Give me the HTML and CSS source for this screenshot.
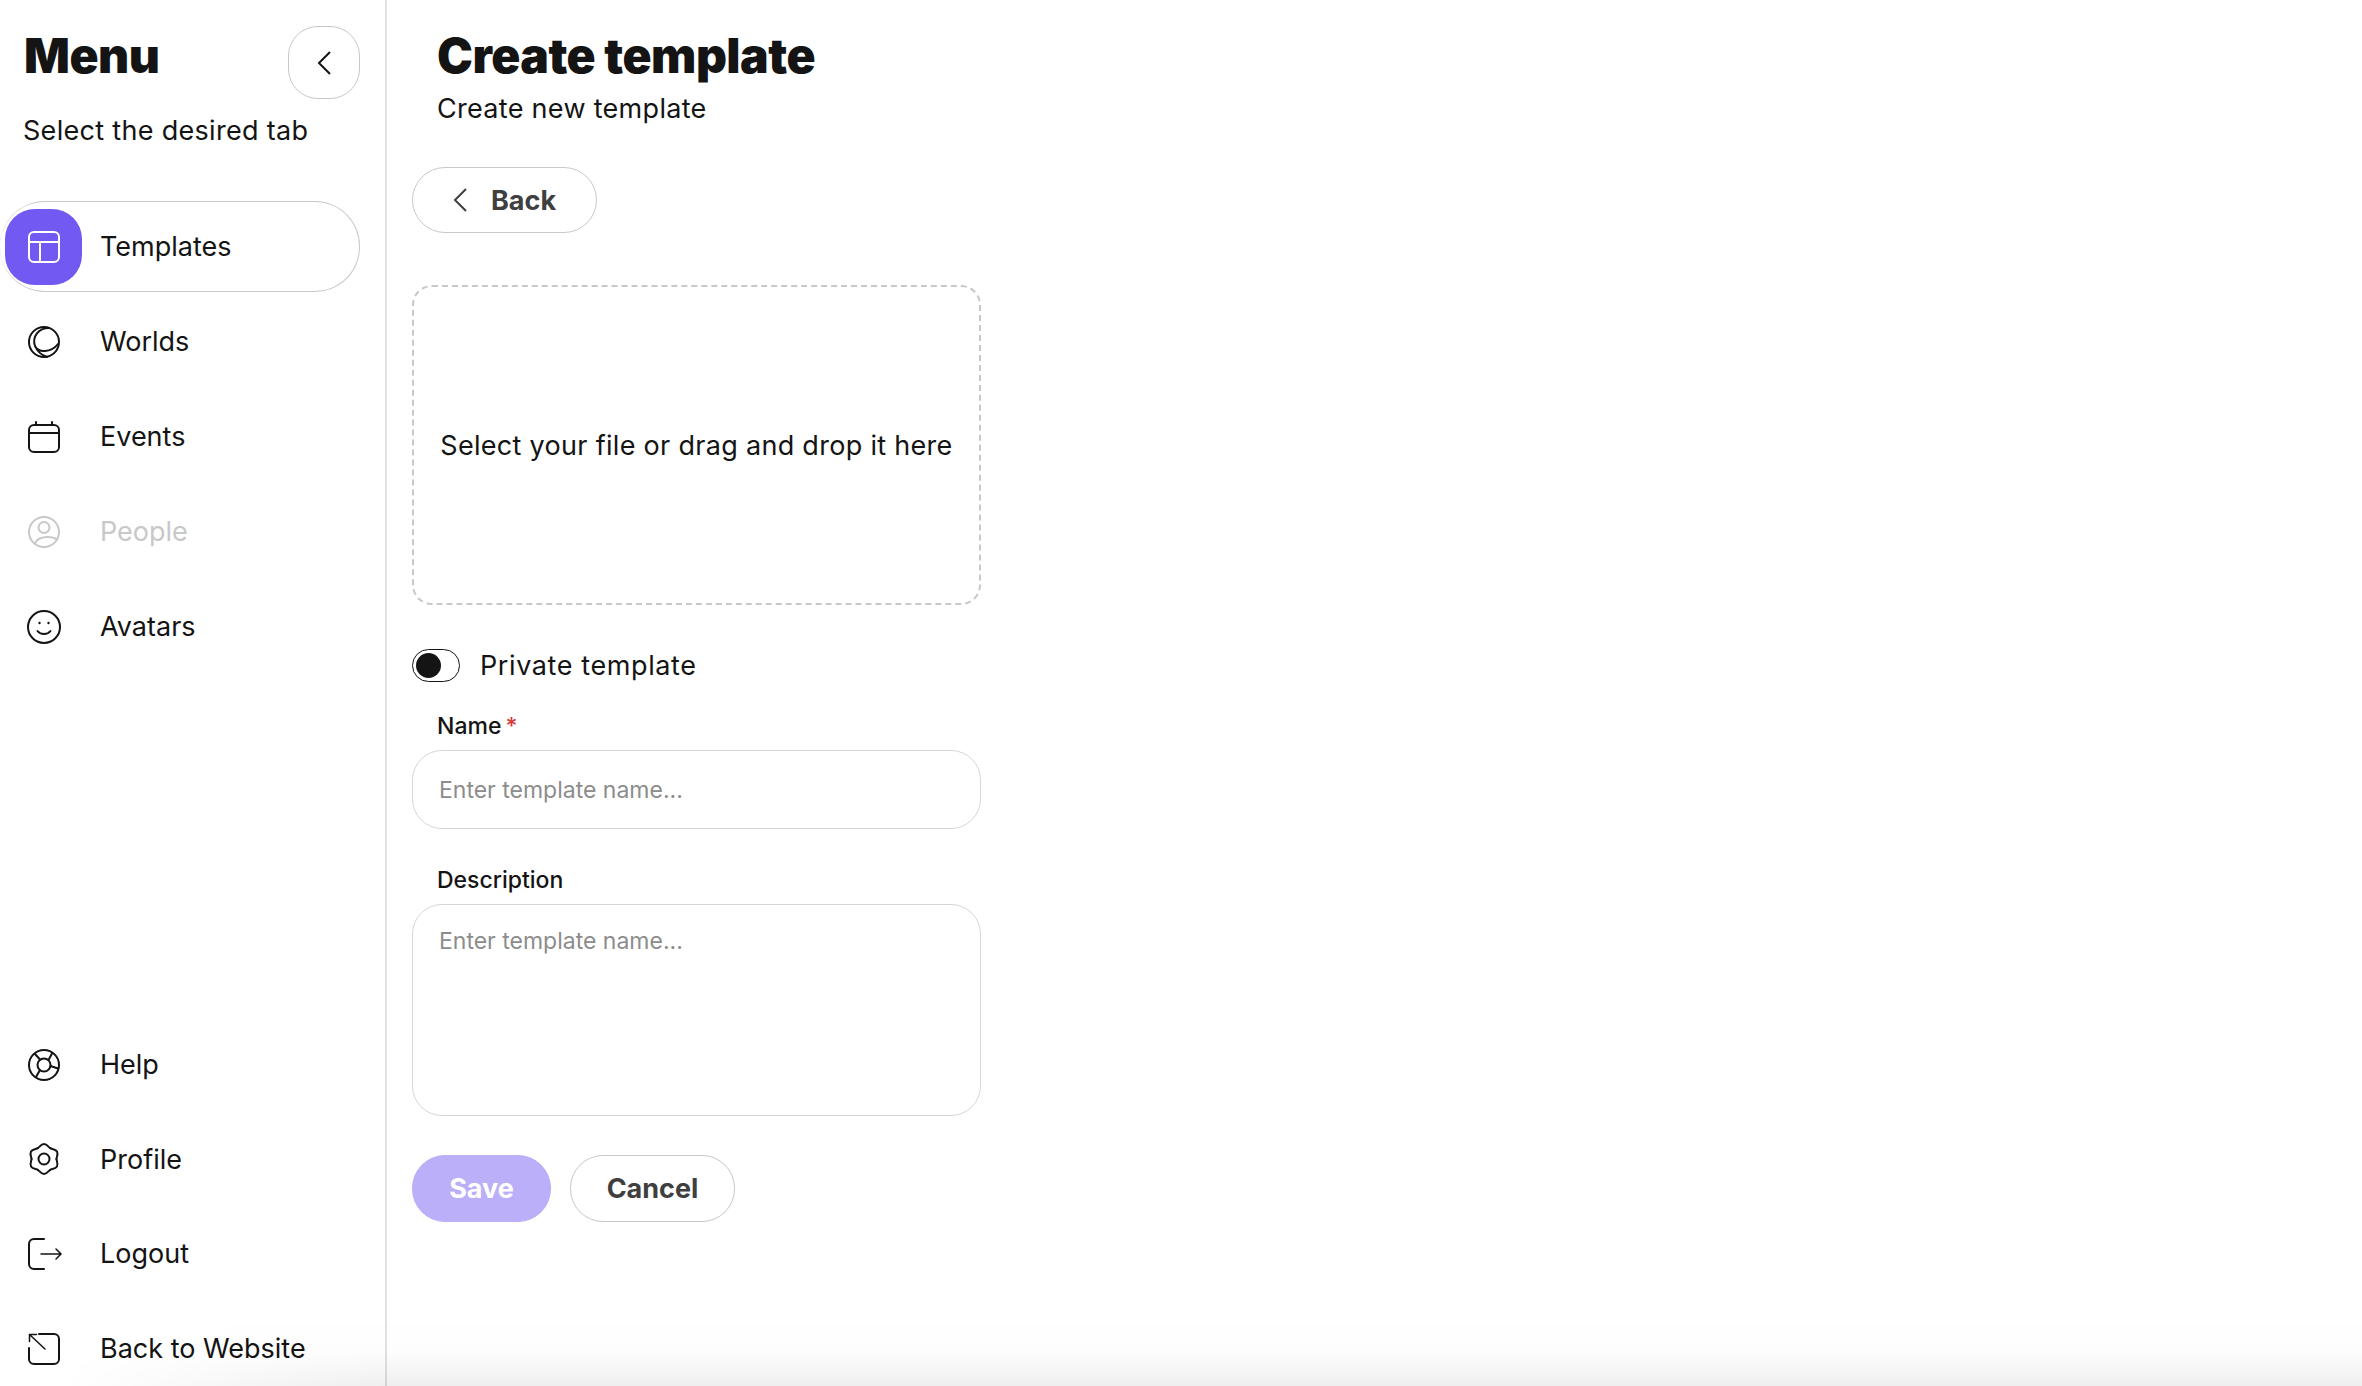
FILE: index.html
```html
<!DOCTYPE html>
<html lang="en">
<head>
    <meta charset="UTF-8">
    <meta name="viewport" content="width=device-width, initial-scale=1.0">
    <title>Create template</title>
    <link rel="stylesheet" href="styles.css">
</head>
<body>
    <aside class="sidebar">
        <div class="menu-head">
            <h2>Menu</h2>
            <button class="collapse-btn" type="button">
                <svg class="chevron" viewBox="0 0 14 24"><path d="M13 1 L2 12 L13 23"/></svg>
            </button>
        </div>
        <p class="menu-sub">Select the desired tab</p>

        <nav class="nav-list">
            <a class="nav-item active" href="#">
                <span class="nav-icon">
                    <svg viewBox="0 0 32 32"><rect x="1" y="1" width="30" height="30" rx="5"/><path d="M1 11 H31 M12 11 V31"/></svg>
                </span>
                Templates
            </a>
            <a class="nav-item" href="#">
                <span class="nav-icon">
                    <svg viewBox="0 0 32 32"><circle cx="16" cy="16" r="15"/><path d="M21 2 C10 2 4 11 7 20 C10 27 23 27 30 18 M7 20 C9 25 13 29 19 31"/></svg>
                </span>
                Worlds
            </a>
            <a class="nav-item" href="#">
                <span class="nav-icon">
                    <svg viewBox="0 0 32 32"><rect x="1" y="4" width="30" height="27" rx="5"/><path d="M1 12 H31 M8 1 V4 M24 1 V4"/></svg>
                </span>
                Events
            </a>
            <a class="nav-item disabled" href="#">
                <span class="nav-icon">
                    <svg viewBox="0 0 32 32"><circle cx="16" cy="16" r="15"/><circle cx="16" cy="11.5" r="5.5"/><path d="M7 27.5 C9 22 15 21 20 21 C24 21 27 22 29 23.5"/></svg>
                </span>
                People
            </a>
            <a class="nav-item" href="#">
                <span class="nav-icon">
                    <svg viewBox="0 0 32 32"><circle cx="16" cy="16" r="16"/><path d="M9.5 20 C12.5 24 19.5 24 22.5 20"/><circle class="dot" cx="11.5" cy="12" r="1.2"/><circle class="dot" cx="20.5" cy="12" r="1.2"/></svg>
                </span>
                Avatars
            </a>
        </nav>

        <nav class="nav-list nav-bottom">
            <a class="nav-item" href="#">
                <span class="nav-icon">
                    <svg viewBox="0 0 32 32"><circle cx="16" cy="16" r="15"/><circle cx="16" cy="16" r="6.5"/><path d="M12 10.5 L7 5 M20.5 11 L24 4.5 M22.5 17 L30 19.5 M12 21 L8 28"/></svg>
                </span>
                Help
            </a>
            <a class="nav-item" href="#">
                <span class="nav-icon">
                    <svg viewBox="0 0 32 32">
                        <path id="lobe" d="M9.75 5.2 C11.5 4.2 13 1 16 1 C19 1 20.5 4.2 22.25 5.2"/>
                        <use href="#lobe" transform="rotate(60 16 16)"/>
                        <use href="#lobe" transform="rotate(120 16 16)"/>
                        <use href="#lobe" transform="rotate(180 16 16)"/>
                        <use href="#lobe" transform="rotate(240 16 16)"/>
                        <use href="#lobe" transform="rotate(300 16 16)"/>
                        <circle cx="16" cy="16" r="5.5"/>
                    </svg>
                </span>
                Profile
            </a>
            <a class="nav-item" href="#">
                <span class="nav-icon">
                    <svg viewBox="0 0 32 32"><path d="M16 1 H6 A5 5 0 0 0 1 6 V26 A5 5 0 0 0 6 31 H16"/><path class="thin" d="M13 16 H33 M28 11 L33 16 L28 21"/></svg>
                </span>
                Logout
            </a>
            <a class="nav-item" href="#">
                <span class="nav-icon">
                    <svg viewBox="0 0 32 32"><path d="M11 1 H26 A5 5 0 0 1 31 6 V26 A5 5 0 0 1 26 31 H6 A5 5 0 0 1 1 26 V15"/><path class="thin" d="M1.5 1.5 L17 16 M1.5 8.5 V1.5 H8.5"/></svg>
                </span>
                Back to Website
            </a>
        </nav>
    </aside>

    <main class="content">
        <header class="page-head">
            <h1>Create template</h1>
            <p>Create new template</p>
        </header>

        <button class="btn btn-back" type="button">
            <svg class="chevron" viewBox="0 0 14 24"><path d="M13 1 L2 12 L13 23"/></svg>
            Back
        </button>

        <form class="template-form">
            <div class="dropzone">Select your file or drag and drop it here</div>

            <label class="toggle-row">
                <span class="toggle"><span class="toggle-knob"></span></span>
                Private template
            </label>

            <div class="field field-name">
                <label for="tplName">Name<span class="required">*</span></label>
                <input type="text" id="tplName" placeholder="Enter template name...">
            </div>

            <div class="field field-desc">
                <label for="tplDesc">Description</label>
                <textarea id="tplDesc" placeholder="Enter template name..."></textarea>
            </div>

            <div class="actions">
                <button class="btn btn-save" type="button">Save</button>
                <button class="btn btn-cancel" type="button">Cancel</button>
            </div>
        </form>
    </main>
</body>
</html>
```

FILE: styles.css
```css
* {
    box-sizing: border-box;
    margin: 0;
    padding: 0;
    font-family: 'Inter', sans-serif;
}

body {
    display: flex;
    height: 100vh;
    overflow: hidden;
    background: #fff;
    color: #141414;
}

/* faint shade along the bottom edge */
body::after {
    content: '';
    position: fixed;
    left: 0;
    right: 0;
    bottom: 0;
    height: 70px;
    pointer-events: none;
    background: linear-gradient(to bottom, rgba(0, 0, 0, 0), rgba(0, 0, 0, 0.008) 50%, rgba(0, 0, 0, 0.062));
    -webkit-mask-image: linear-gradient(to right, transparent 60px, #000 390px);
    mask-image: linear-gradient(to right, transparent 60px, #000 390px);
}

.sidebar {
    flex: 0 0 387px;
    height: 100vh;
    display: flex;
    flex-direction: column;
    border-right: 2px solid #e2e2e2;
    padding-top: 26px;
}

.menu-head {
    display: flex;
    justify-content: space-between;
    align-items: flex-start;
    padding: 0 25px 0 24px;
}

.menu-head h2 {
    font-size: 48px;
    font-weight: 900;
    line-height: 60px;
    letter-spacing: -0.5px;
}

.collapse-btn {
    width: 72px;
    height: 73px;
    display: flex;
    align-items: center;
    justify-content: center;
    background: #fff;
    border: 1px solid #c8c8c8;
    border-radius: 30px;
}

.chevron {
    width: 14px;
    height: 24px;
    fill: none;
    stroke: #141414;
    stroke-width: 2;
}

.menu-sub {
    font-size: 27px;
    line-height: 36px;
    margin-top: 14px;
    padding-left: 23px;
    letter-spacing: 0.3px;
}

.nav-list {
    display: flex;
    flex-direction: column;
    gap: 4px;
    margin-top: 52px;
}

.nav-bottom {
    margin-top: auto;
    margin-bottom: -8px;
    gap: 3.6px;
}

.nav-item {
    display: flex;
    align-items: center;
    height: 91px;
    width: 360px;
    padding-left: 5px;
    font-size: 27px;
    color: #141414;
    text-decoration: none;
}

.nav-icon {
    flex: 0 0 77px;
    height: 76px;
    margin-right: 18px;
    display: flex;
    align-items: center;
    justify-content: center;
    border-radius: 30px;
}

.nav-icon svg {
    width: 32px;
    height: 32px;
    overflow: visible;
    fill: none;
    stroke: #141414;
    stroke-width: 2;
    stroke-linecap: round;
}

.nav-icon .dot {
    fill: #141414;
    stroke: none;
}

.nav-icon .thin {
    stroke-width: 1.5;
}

.nav-item.active {
    border: 1px solid #c8c8c8;
    border-left: 0;
    border-radius: 0 45px 45px 0;
    border-radius: 45px;
}

.nav-item.active .nav-icon {
    background: #7159f2;
}

.nav-item.active .nav-icon svg {
    stroke: #fff;
}

.nav-item.disabled {
    color: #c8c8c8;
}

.nav-item.disabled .nav-icon svg {
    stroke: #c8c8c8;
}

.content {
    flex: 1;
    padding: 26px 0 0 25px;
}

.page-head {
    padding-left: 25px;
}

.page-head h1 {
    font-size: 48px;
    font-weight: 900;
    line-height: 60px;
    letter-spacing: -0.5px;
}

.page-head p {
    font-size: 27px;
    line-height: 36px;
    margin-top: 5px;
    letter-spacing: 0.3px;
}

.btn {
    display: flex;
    align-items: center;
    justify-content: center;
    height: 66px;
    border-radius: 33px;
    font-size: 27px;
    font-weight: 700;
    background: #fff;
    color: #3f3f3f;
    border: 1px solid #c8c8c8;
}

.btn-back {
    width: 185px;
    gap: 24px;
    margin-top: 40px;
}

.btn-back .chevron {
    stroke: #3f3f3f;
}

.template-form {
    width: 569px;
    margin-top: 52px;
}

.dropzone {
    height: 320px;
    display: flex;
    align-items: center;
    justify-content: center;
    border: 2px dashed #c8c8c8;
    border-radius: 20px;
    font-size: 27px;
    letter-spacing: 0.3px;
}

.toggle-row {
    display: flex;
    align-items: center;
    gap: 20px;
    margin-top: 44px;
    font-size: 27px;
    letter-spacing: 0.6px;
}

.toggle {
    width: 48px;
    height: 33px;
    padding: 3px;
    display: flex;
    background: #fff;
    border: 1px solid #141414;
    border-radius: 17px;
}

.toggle-knob {
    width: 25px;
    height: 25px;
    background: #141414;
    border-radius: 50%;
}

.field label {
    display: block;
    padding-left: 25px;
    margin-bottom: 10px;
    font-size: 23px;
    font-weight: 500;
    line-height: 28px;
}

.required {
    color: #d63a3a;
    margin-left: 4px;
}

.field input,
.field textarea {
    display: block;
    width: 100%;
    border: 1px solid #d6d6d6;
    border-radius: 30px;
    background: #fff;
    font-size: 23px;
    color: #141414;
    outline: none;
    resize: none;
    padding: 0 26px;
}

.field input::placeholder,
.field textarea::placeholder {
    color: #8c8c8c;
}

.field input {
    height: 79px;
}

.field textarea {
    height: 212px;
    padding-top: 22px;
}

.field-name {
    margin-top: 30px;
}

.field-desc {
    margin-top: 37px;
}

.actions {
    display: flex;
    gap: 19px;
    margin-top: 39px;
}

.btn-save {
    width: 139px;
    height: 67px;
    background: #baaff8;
    border-color: #baaff8;
    color: #fff;
}

.btn-cancel {
    width: 165px;
    height: 67px;
}
```
